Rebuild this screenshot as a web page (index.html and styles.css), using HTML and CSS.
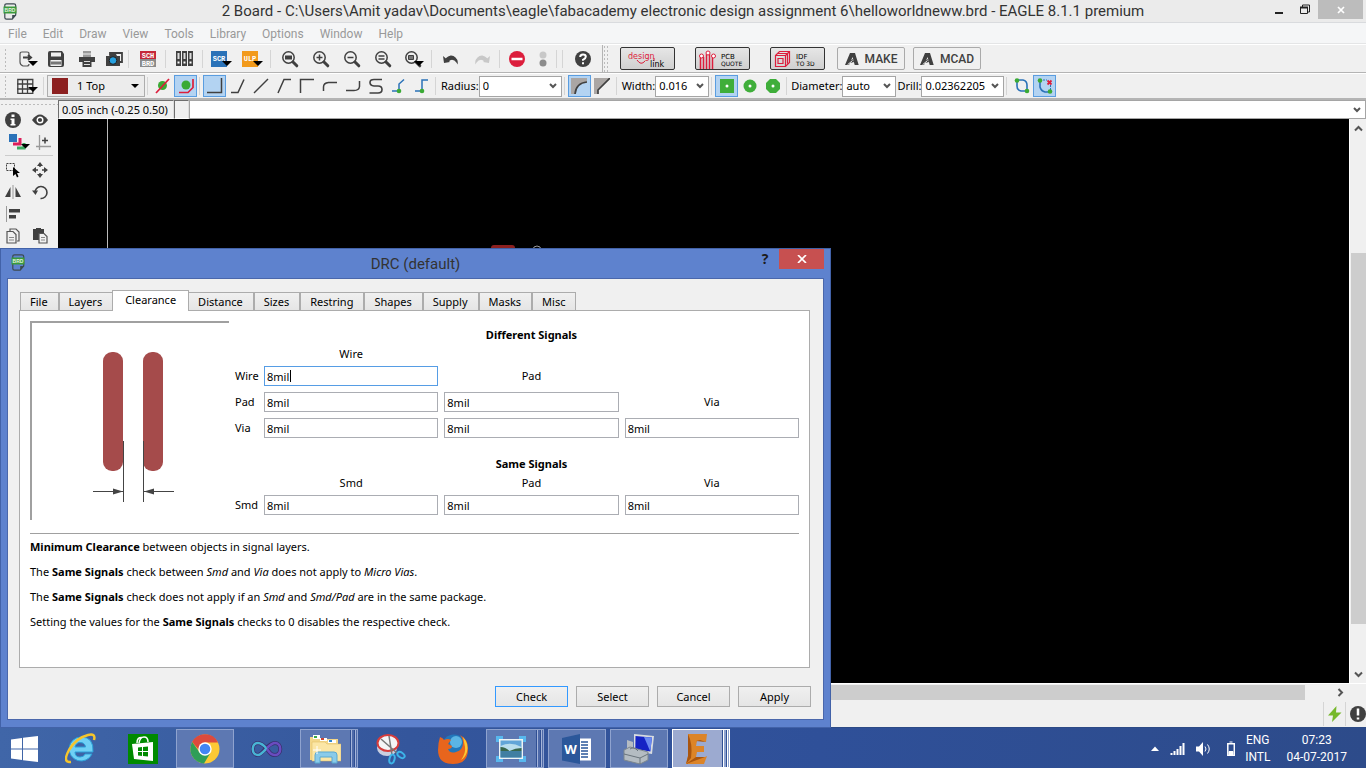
FILE: index.html
```html
<!DOCTYPE html>
<html lang="en">
<head>
    <meta charset="UTF-8">
    <title>2 Board - EAGLE 8.1.1 premium</title>
    <meta name="viewport" content="width=device-width, initial-scale=1.0">
    <link rel="stylesheet" href="styles.css">
</head>
<body>
<!-- shared symbols -->
<svg class="defs" width="0" height="0">
    <symbol id="brd" viewBox="0 0 16 17">
        <path d="M4.500.800h7.500q1.700 0 1.700 1.700v9.500l-3.500 4.200H4.500q-1.700 0-1.700-1.700v-12Q2.800.800 4.500.800z" fill="none" stroke="#3c4a50" stroke-width="1.200"/>
        <path d="M13.500 12h-3.300v4z" fill="#3c4a50"/>
        <path d="M1.500 3.500h13v7h-13z" fill="#3a9a3c"/>
        <text x="8" y="9" text-anchor="middle" font-family="Liberation Sans, sans-serif" font-size="5" font-weight="bold" fill="#e4f5e0">BRD</text>
    </symbol>
    <symbol id="lens" viewBox="0 0 18 18">
        <circle cx="7.500" cy="7.500" r="5.700" fill="none" stroke="#404040" stroke-width="1.500"/>
        <path d="M12 12l3.800 3.800" stroke="#404040" stroke-width="3" stroke-linecap="round"/>
    </symbol>
    <symbol id="adsk" viewBox="0 0 14 14">
        <path d="M0 13L5 1h5l3.700 12h-4L7.600 5 4 13z" fill="#404040"/>
        <path d="M3 10l5-3 1 3-4 1z" fill="#404040"/>
        <path d="M2.500 12.800L7.500 8.500" stroke="#f0f0f0" stroke-width="1"/>
    </symbol>
</svg>

<div class="window">
    <header class="titlebar">
        <svg class="app-icon" width="16" height="17"><use href="#brd"/></svg>
        <h1 class="title">2 Board - C:\Users\Amit yadav\Documents\eagle\fabacademy electronic design assignment 6\helloworldneww.brd - EAGLE 8.1.1 premium</h1>
        <div class="window-buttons">
            <button class="win-btn" aria-label="Minimize"><svg width="10" height="10"><path d="M1 8h8" stroke="#222" stroke-width="2"/></svg></button>
            <button class="win-btn" aria-label="Restore"><svg width="10" height="11"><path d="M.5 3.500h7v6h-7zM2.500 3V1h7v7H8" fill="none" stroke="#222"/><path d="M0 3.500h8" stroke="#222" stroke-width="2"/></svg></button>
            <button class="win-btn win-close" aria-label="Close"><svg width="8" height="8"><path d="M1 1l6 6M7 1L1 7" stroke="#fff" stroke-width="1.700"/></svg></button>
        </div>
    </header>

    <nav class="menubar">
        <button>File</button>
        <button>Edit</button>
        <button>Draw</button>
        <button>View</button>
        <button>Tools</button>
        <button>Library</button>
        <button>Options</button>
        <button>Window</button>
        <button>Help</button>
    </nav>

    <div class="toolbar">
        <span class="handle"></span>
        <button class="tool" aria-label="Open"><svg width="20" height="16"><path d="M11 5V3q0-2-2-2H4Q2 1 2 3v8q0 3 3 4h4q2 0 2-2" fill="none" stroke="#555" stroke-width="1.200"/><path d="M5 6.500h7M10 4l3 2.500L10 9" fill="none" stroke="#404040" stroke-width="2"/><path d="M10 10h10l-5 5z" fill="#000"/></svg></button>
        <button class="tool" aria-label="Save"><svg width="16" height="16"><path d="M2 0h12l2 3v11q0 2-2 2H2q-2 0-2-2V2q0-2 2-2z" fill="#404040"/><path d="M3 1.500h10v4H3zM2.500 9h11v6h-11z" fill="#f0f0f0"/><path d="M3 10.500h10v3H3z" fill="#777"/></svg></button>
        <button class="tool wider" aria-label="Print"><svg width="16" height="16"><path d="M4 0h8v6H4z" fill="#999"/><path d="M4 3h8" stroke="#eee"/><path d="M0 6h16v5H0z" fill="#404040"/><path d="M3.500 9h9v7h-9z" fill="#404040"/><path d="M5 10.500h6M5 13.500h6" stroke="#ddd"/></svg></button>
        <button class="tool tight" aria-label="Export image"><svg width="17" height="16"><path d="M4 4V2h12v9h-2" fill="none" stroke="#404040" stroke-width="1.800"/><path d="M0 5h3l1-2h6l1 2h3v10H0z" fill="#404040"/><circle cx="7" cy="9.500" r="3.800" fill="#27a1e0" stroke="#222"/></svg></button>
        <span class="sep"></span>
        <button class="tool wide" aria-label="Switch to schematic"><svg width="16" height="16" class="tiny"><path d="M0 0h16v8H0z" fill="#c5283a"/><path d="M0 8h16v8H0z" fill="#8c8c8c"/><text x="8" y="7">SCH</text><text x="8" y="15">BRD</text></svg></button>
        <span class="sep"></span>
        <button class="tool wide" aria-label="Library manager"><svg width="17" height="15"><path d="M0 0h5v15H0zM6 0h5v15H6zM12 0h5v15h-5z" fill="#404040"/><path d="M1.500 2h2v6h-2zM7.500 2h2v6h-2zM13.500 2h2v6h-2z" fill="#ddd"/><path d="M1.500 11.500h2M7.500 11.500h2M13.500 11.500h2" stroke="#fff" stroke-width="2"/></svg></button>
        <span class="sep"></span>
        <button class="tool wide" aria-label="Run script"><svg width="21" height="16" class="tiny"><path d="M0 0h16v16H0z" fill="#2a72b8"/><text x="8" y="10">SCR</text><path d="M11 10h10l-5 5z" fill="#000"/></svg></button>
        <button class="tool wide" aria-label="Run ULP"><svg width="21" height="16" class="tiny"><path d="M0 0h16v16H0z" fill="#f29a1b"/><text x="8" y="10">ULP</text><path d="M11 10h10l-5 5z" fill="#000"/></svg></button>
        <span class="sep"></span>
        <button class="tool wide" aria-label="Zoom to fit"><svg width="18" height="18"><use href="#lens"/><path d="M4 5.500h7v4H4z" fill="#404040"/></svg></button>
        <button class="tool wide" aria-label="Zoom in"><svg width="18" height="18"><use href="#lens"/><path d="M4.500 7.500h6M7.500 4.500v6" stroke="#404040" stroke-width="1.500"/></svg></button>
        <button class="tool wide" aria-label="Zoom out"><svg width="18" height="18"><use href="#lens"/><path d="M4.500 7.500h6" stroke="#404040" stroke-width="1.500"/></svg></button>
        <button class="tool wide" aria-label="Redraw"><svg width="18" height="18"><use href="#lens"/><path d="M4.500 6h6M4.500 9h6" stroke="#404040" stroke-width="1.500"/></svg></button>
        <button class="tool wide" aria-label="Zoom select"><svg width="20" height="18"><use href="#lens" width="18"/><path d="M4.500 5.500h5v4h-5z" fill="#777" stroke="#404040"/><path d="M10 11h10l-5 5z" fill="#000"/></svg></button>
        <span class="sep"></span>
        <button class="tool wide" aria-label="Undo"><svg width="16" height="12"><path d="M3 6q5-5 9-1 2 2 2 4-2-3-5-3-2 0-4 2" fill="#404040" stroke="#404040" stroke-width="1.500"/><path d="M0 3l1 7 6-1z" fill="#404040"/></svg></button>
        <button class="tool wide" aria-label="Redo"><svg width="16" height="12"><path d="M13 6Q8 1 4 5 2 7 2 9q2-3 5-3 2 0 4 2" fill="#c8c8c8" stroke="#c8c8c8" stroke-width="1.500"/><path d="M16 3l-1 7-6-1z" fill="#c8c8c8"/></svg></button>
        <span class="sep"></span>
        <button class="tool" aria-label="Stop"><svg width="16" height="16"><circle cx="8" cy="8" r="8" fill="#dc1e3c"/><path d="M2.500 8h11" stroke="#fff" stroke-width="2.500"/></svg></button>
        <button class="tool tight" aria-label="Go"><svg width="8" height="16"><circle cx="4" cy="4" r="3.500" fill="#c8c8c8"/><circle cx="4" cy="12" r="3.500" fill="#8c8c8c"/></svg></button>
        <span class="sep"></span>
        <span class="sep"></span>
        <button class="tool wider" aria-label="Help"><svg width="16" height="16"><circle cx="8" cy="8" r="8" fill="#404040"/><path d="M5.200 6q0-2.500 2.800-2.500t2.800 2.300Q10.800 7.300 8 8.800v1M8 11.200v2" fill="none" stroke="#fff" stroke-width="2"/></svg></button>
        <span class="handle split"></span>
        <div class="brand-buttons">
            <button class="brand" aria-label="Design link"><svg width="53" height="20" class="pix"><path d="M16 11q4 6 8 1M33 9v3" fill="none" stroke="#dc1e3c"/><text x="7" y="10" font-size="8" fill="#dc1e3c">design</text><text x="29" y="18" font-size="8">link</text></svg></button>
            <button class="brand" aria-label="PCB quote"><svg width="53" height="20" class="pix"><path d="M4.500 8v12M7.500 8v12M10.500 5v15M13.500 5v15M16.500 8v12" fill="none" stroke="#dc1e3c" stroke-width="1.500"/><g fill="#fff" stroke="#dc1e3c"><circle cx="5.500" cy="7" r="2"/><circle cx="12" cy="4" r="2"/><circle cx="17.500" cy="7" r="2"/></g><text x="25" y="10" font-size="7">PCB</text><text x="25" y="17" font-size="6">QUOTE</text></svg></button>
            <button class="brand" aria-label="IDF to 3D"><svg width="53" height="20" class="pix"><path d="M4.500 6.500l4-4h10v11l-4 4h-10zM4.500 6.500h10v11M14.500 6.500l4-4M7 9.500h5v5H7zM6 4.500h10.500v10" fill="none" stroke="#dc1e3c" stroke-width="1.200"/><text x="25" y="10" font-size="7">IDF</text><text x="25" y="17" font-size="6">TO 3D</text></svg></button>
        </div>
        <div class="adsk-buttons">
            <button class="adsk"><svg width="14" height="14"><use href="#adsk"/></svg>MAKE</button>
            <button class="adsk"><svg width="14" height="14"><use href="#adsk"/></svg>MCAD</button>
        </div>
    </div>

    <div class="toolbar params">
        <span class="handle"></span>
        <button class="tool grid" aria-label="Grid"><svg width="21" height="16"><path d="M.8 1.500h15v14H.8zM5.500 1v15M10.500 1v15M0 6h16M0 11h16" fill="none" stroke="#404040" stroke-width="1.300"/><path d="M11 9h10l-5 5z" fill="#000"/></svg></button>
        <span class="sep"></span>
        <span class="layer">
            <span class="swatch"></span>
            <select aria-label="Layer"><option>1 Top</option></select>
        </span>
        <span class="sep"></span>
        <button class="tool" aria-label="Ignore obstacles"><svg width="16" height="16"><circle cx="7.500" cy="7.500" r="4.500" fill="#3aaa35"/><path d="M1 15L14 1" stroke="#dc1e3c" stroke-width="1.700"/></svg></button>
        <button class="tool on" aria-label="Walkaround"><svg width="16" height="16"><circle cx="8" cy="7" r="4.500" fill="#3aaa35"/><path d="M1 14.500h9l5-5V1" fill="none" stroke="#dc1e3c" stroke-width="1.700"/></svg></button>
        <span class="sep"></span>
        <button class="tool on" aria-label="Bend 0"><svg width="16" height="16"><path d="M0 14.500h14.500V0" fill="none" stroke="#404040" stroke-width="1.500"/></svg></button>
        <button class="tool" aria-label="Bend 1"><svg width="16" height="16"><path d="M1 14.500h7l6-13" fill="none" stroke="#404040" stroke-width="1.500"/></svg></button>
        <button class="tool" aria-label="Bend 2"><svg width="16" height="16"><path d="M1 15L15 1" fill="none" stroke="#404040" stroke-width="1.500"/></svg></button>
        <button class="tool" aria-label="Bend 3"><svg width="16" height="16"><path d="M2 15L8 1.500h7" fill="none" stroke="#404040" stroke-width="1.500"/></svg></button>
        <button class="tool" aria-label="Bend 4"><svg width="16" height="16"><path d="M1.500 15V1.500H15" fill="none" stroke="#404040" stroke-width="1.500"/></svg></button>
        <button class="tool" aria-label="Bend 5"><svg width="16" height="16"><path d="M1.500 13V9q0-4 5-4.500H15" fill="none" stroke="#404040" stroke-width="1.500"/></svg></button>
        <button class="tool" aria-label="Bend 6"><svg width="16" height="16"><path d="M1 12.500h8q5 0 5.500-4V3" fill="none" stroke="#404040" stroke-width="1.500"/></svg></button>
        <button class="tool" aria-label="Bend 7"><svg width="16" height="16"><path d="M14 1.500H6Q2 1.500 2 4.500T6 8h4q4 0 4 3.500T10 15H1.500" fill="none" stroke="#404040" stroke-width="1.600"/></svg></button>
        <button class="tool" aria-label="Route to"><svg width="16" height="16"><path d="M1 13h7V6l5-4.500" fill="none" stroke="#2a72b8" stroke-width="1.500"/><circle cx="8" cy="13" r="2.300" fill="#3aaa35"/></svg></button>
        <button class="tool" aria-label="Route from"><svg width="16" height="16"><path d="M1 13h7V2h6" fill="none" stroke="#2a72b8" stroke-width="1.500"/><circle cx="8" cy="13" r="2.300" fill="#3aaa35"/></svg></button>
        <span class="sep"></span>
        <label for="radius">Radius:</label>
        <select id="radius" class="combo long"><option>0</option></select>
        <span class="sep"></span>
        <button class="tool on" aria-label="Round miter"><svg width="16" height="16"><path d="M0 0h16v4Q5 5 4 16H0z" fill="#aaa6a4"/><path d="M4 16Q5 5 16 4" fill="none" stroke="#404040" stroke-width="1.700"/></svg></button>
        <button class="tool" aria-label="Straight miter"><svg width="16" height="16"><path d="M0 0h16L4 12v4H0z" fill="#aaa6a4"/><path d="M4 16v-4L16 0" fill="none" stroke="#404040" stroke-width="1.700"/></svg></button>
        <span class="sep"></span>
        <label for="width">Width:</label>
        <select id="width" class="combo"><option>0.016</option></select>
        <span class="sep"></span>
        <button class="tool on" aria-label="Square via"><svg width="14" height="14"><path d="M0 0h14v14H0z" fill="#3fae3a"/><circle cx="7" cy="7" r="1.500" fill="#fff"/></svg></button>
        <button class="tool" aria-label="Round via"><svg width="14" height="14"><circle cx="7" cy="7" r="6.500" fill="#3fae3a"/><circle cx="7" cy="7" r="1.500" fill="#fff"/></svg></button>
        <button class="tool" aria-label="Octagon via"><svg width="14" height="14"><path d="M4 0h6l4 4v6l-4 4H4l-4-4V4z" fill="#3fae3a"/><circle cx="7" cy="7" r="1.500" fill="#fff"/></svg></button>
        <span class="sep"></span>
        <label for="diameter" class="snug">Diameter:</label>
        <select id="diameter" class="combo"><option>auto</option></select>
        <label for="drill" class="snug">Drill:</label>
        <select id="drill" class="combo long"><option>0.02362205</option></select>
        <span class="sep"></span>
        <button class="tool" aria-label="Loop removal"><svg width="16" height="16"><path d="M2 2h7q4 1 4 5v6H7q-4-1-4-5V2" fill="none" stroke="#2a72b8" stroke-width="1.600"/><circle cx="3" cy="2.500" r="2.300" fill="#3aaa35"/><circle cx="13" cy="13" r="2.300" fill="#3aaa35"/></svg></button>
        <button class="tool on" aria-label="Remove loops"><svg width="16" height="16"><path d="M3 2v7q1 4 5 5h5" fill="none" stroke="#2a72b8" stroke-width="1.600"/><path d="M6 2h4M13.500 7v5" stroke="#2a72b8" stroke-dasharray="2 1"/><path d="M10.500 2.500l4 4M14.500 2.500l-4 4" stroke="#dc1e3c" stroke-width="1.800"/><circle cx="3" cy="2.500" r="2.300" fill="#3aaa35"/><circle cx="13" cy="13.500" r="2.300" fill="#3aaa35"/></svg></button>
    </div>

    <main class="work">
        <aside class="palette">
            <button aria-label="Info"><svg width="16" height="16"><circle cx="8" cy="8" r="8" fill="#404040"/><path d="M6.500 2.500h3v2.500h-3zM5.500 6.500h4V12h1v1.500h-5V12h1V8h-1z" fill="#fff"/></svg></button>
            <button aria-label="Show"><svg width="16" height="12"><path d="M0 6q8-11 16 0Q8 17 0 6z" fill="#404040"/><circle cx="8" cy="6" r="2.800" fill="#404040" stroke="#fff" stroke-width="1.400"/></svg></button>
            <button class="layers" aria-label="Layer settings"><svg width="21" height="16"><path d="M0 0h8v8H0z" fill="#2a72b8"/><path d="M11 4v6H4" fill="none" stroke="#dc1e5a" stroke-width="3"/><path d="M15 9v5H8" fill="none" stroke="#3aaa60" stroke-width="3"/><path d="M12 10h9l-4.500 4.500z" fill="#000"/></svg></button>
            <button class="mark" aria-label="Mark"><svg width="16" height="16"><path d="M3.500 1v15M0 12.500h15" stroke="#999" stroke-width="1.300"/><path d="M6 6.500h6M9 3.500v6" stroke="#404040" stroke-width="1.500"/></svg></button>
            <hr>
            <button aria-label="Group"><svg width="16" height="16"><path d="M1.500 1.500h8v7h-8z" fill="none" stroke="#404040" stroke-dasharray="2 1"/><path d="M8 5v9l2.500-2 1.500 3.500 1.500-1L12 11h3z" fill="#000"/></svg></button>
            <button aria-label="Move"><svg width="16" height="16"><path d="M8 0l3 4H5zM8 16l3-4H5zM0 8l4-3v6zM16 8l-4-3v6z" fill="#404040"/><path d="M8 3v2M8 11v2M3 8h3M10 8h3" stroke="#404040" stroke-width="1.500"/></svg></button>
            <button aria-label="Mirror"><svg width="16" height="14"><path d="M5.500 2v10H0zM10.500 2v10H16z" fill="#404040"/><path d="M8 0v14" stroke="#999"/></svg></button>
            <button aria-label="Rotate"><svg width="16" height="16"><path d="M3 9a6 6 0 1 1 5.500 5.500" fill="none" stroke="#404040" stroke-width="1.600"/><path d="M0 6.500h6L3.500 11z" fill="#404040"/></svg></button>
            <button aria-label="Align"><svg width="16" height="16"><path d="M1.500 0v16" stroke="#999"/><path d="M4 3h11v3.500H4zM4 9h7v3.500H4z" fill="#404040"/></svg></button>
            <span></span>
            <button aria-label="Copy"><svg width="14" height="16"><path d="M4 3V1h6l3 3v9h-2M1 3.500h6l3 3V15H1z" fill="#f0f0f0" stroke="#555" stroke-width="1.200"/><path d="M3 9.500h5M3 12h5" stroke="#888"/></svg></button>
            <button aria-label="Paste"><svg width="15" height="16"><path d="M0 1h3V0h5v1h3v11H0z" fill="#404040"/><path d="M6 5.500h5l3 3V15H6z" fill="#f0f0f0" stroke="#555" stroke-width="1.200"/><path d="M8 9.500h4M8 12h4" stroke="#888"/></svg></button>
        </aside>

        <section class="editor">
            <div class="command-row">
                <output class="coords">0.05 inch (-0.25 0.50)</output>
                <span class="status-cell"></span>
                <input class="command" type="text" aria-label="Command line">
            </div>
            <div class="board-row">
                <div class="board">
                    <svg width="490" height="129">
                        <path d="M49.500 0v129" stroke="#bbb"/>
                        <path d="M433 129q0-3 3-3h18q3 0 3 3z" fill="#8c2020"/>
                        <circle cx="479" cy="131" r="4" fill="none" stroke="#999"/>
                    </svg>
                </div>
                <div class="scroll-v">
                    <svg width="9" height="7"><path d="M1 5.500l3.500-3.500L8 5.500" fill="none" stroke="#555" stroke-width="2"/></svg>
                    <span class="thumb"></span>
                    <svg width="9" height="7"><path d="M1 1.500L4.500 5 8 1.500" fill="none" stroke="#555" stroke-width="2"/></svg>
                </div>
            </div>
            <div class="scroll-h">
                <span class="thumb"></span>
                <svg width="7" height="9"><path d="M1.500 1L5 4.500 1.500 8" fill="none" stroke="#555" stroke-width="2"/></svg>
            </div>
        </section>
    </main>

    <footer class="statusbar">
        <span class="sep"></span>
        <svg width="14" height="16"><path d="M8.500 0L0 9.500h5L4 16l9.500-9.500H8z" fill="#76b82a"/></svg>
        <span class="sep"></span>
        <svg width="16" height="16"><circle cx="8" cy="8" r="8" fill="#404040"/><path d="M8 2.500v7M8 11.500v2" stroke="#fff" stroke-width="2.500"/></svg>
    </footer>
</div>

<div class="dialog" role="dialog" aria-labelledby="drc-title">
    <div class="dialog-title">
        <svg class="app-icon" width="16" height="17"><use href="#brd"/></svg>
        <h2 id="drc-title">DRC (default)</h2>
        <div class="dialog-buttons">
            <button class="help">?</button>
            <button class="close" aria-label="Close"><svg width="10" height="8"><path d="M1 0l8 8M9 0L1 8" stroke="#fff" stroke-width="1.700"/></svg></button>
        </div>
    </div>
    <div class="dialog-body">
        <div class="tabs" role="tablist">
            <button role="tab">File</button>
            <button role="tab">Layers</button>
            <button role="tab" class="selected" aria-selected="true">Clearance</button>
            <button role="tab">Distance</button>
            <button role="tab">Sizes</button>
            <button role="tab">Restring</button>
            <button role="tab">Shapes</button>
            <button role="tab">Supply</button>
            <button role="tab">Masks</button>
            <button role="tab">Misc</button>
        </div>
        <div class="panel">
            <div class="settings">
                <div class="preview">
                    <svg width="197" height="197">
                        <rect x="71" y="29" width="20" height="119" rx="9" fill="#a54b4b"/>
                        <rect x="111" y="29" width="20" height="119" rx="9" fill="#a54b4b"/>
                        <path d="M91.500 118v61M111.500 118v61M61 168.500h30M112 168.500h30" stroke="#444"/>
                        <path d="M91 168.500l-10-3v6zM112 168.500l10-3v6z" fill="#444"/>
                    </svg>
                </div>
                <form class="clearances">
                    <h3>Different Signals</h3>
                    <span class="col col-1">Wire</span>
                    <label for="ww">Wire</label>
                    <input id="ww" class="focused" type="text" value="8mil">
                    <span class="col">Pad</span>
                    <label for="pw">Pad</label>
                    <input id="pw" type="text" value="8mil">
                    <input aria-label="Pad to pad" type="text" value="8mil">
                    <span class="col">Via</span>
                    <label for="vw">Via</label>
                    <input id="vw" type="text" value="8mil">
                    <input aria-label="Via to pad" type="text" value="8mil">
                    <input aria-label="Via to via" type="text" value="8mil">
                    <h3>Same Signals</h3>
                    <span class="col col-1">Smd</span>
                    <span class="col">Pad</span>
                    <span class="col">Via</span>
                    <label for="ss">Smd</label>
                    <input id="ss" type="text" value="8mil">
                    <input aria-label="Smd to pad" type="text" value="8mil">
                    <input aria-label="Smd to via" type="text" value="8mil">
                </form>
            </div>
            <div class="notes">
                <p><b>Minimum Clearance</b> between objects in signal layers.</p>
                <p>The <b>Same Signals</b> check between <i>Smd</i> and <i>Via</i> does not apply to <i>Micro Vias</i>.</p>
                <p>The <b>Same Signals</b> check does not apply if an <i>Smd</i> and <i>Smd/Pad</i> are in the same package.</p>
                <p>Setting the values for the <b>Same Signals</b> checks to 0 disables the respective check.</p>
            </div>
        </div>
        <div class="actions">
            <button class="default">Check</button>
            <button>Select</button>
            <button>Cancel</button>
            <button>Apply</button>
        </div>
    </div>
</div>

<footer class="taskbar">
    <button class="start" aria-label="Start"><svg width="27" height="26"><path d="M0 3.500L11 2v10.500H0zM12 1.800L27 0v12.500H12zM0 13.500h11V24L0 22.500zM12 13.500h15V26l-15-1.800z" fill="#fff"/></svg></button>
    <button class="task" aria-label="Internet Explorer"><svg width="32" height="32"><path d="M16 4a12 12 0 1 0 11 17h-7q-1 3-5 3-5 0-5-5h18Q29 4 16 4zm-6 10q1-4.500 5-4.500 5 0 5.500 4.500z" fill="#6fd0f5" stroke="#2a9fd8"/><path d="M6 29Q-3 30 4 17 11 5 23 2q8-2 6 5" fill="none" stroke="#f6c52c" stroke-width="2.500"/></svg></button>
    <button class="task" aria-label="Store"><svg width="30" height="30"><path d="M0 0h30v30H0z" fill="#008a00"/><path d="M4 10l21-2v19L6 25z" fill="#fff"/><path d="M9 9q0-6 5-5.500M11 9q1-6 5-6t4 5" fill="none" stroke="#fff" stroke-width="1.500"/><path d="M10 13.500l4-.5v4h-4zM15 13l5-.5V17h-5zM10 18h4v4l-4-.5zM15 18h5v4.500l-5-.5z" fill="#008a00"/></svg></button>
    <button class="task open" aria-label="Chrome"><svg width="30" height="30"><circle cx="15" cy="15" r="14.500" fill="#fcc934"/><path d="M2.200 8A14.500 14.500 0 0 1 28 8.500H15l-6.500 7z" fill="#dc4a3d"/><path d="M2.200 8A14.500 14.500 0 0 0 14 29.500l6-10-11-2z" fill="#2f9e58"/><circle cx="15" cy="15" r="6.700" fill="#fff"/><circle cx="15" cy="15" r="5.300" fill="#4285f4"/></svg></button>
    <button class="task" aria-label="Visual Studio"><svg width="32" height="18"><path d="M16 9C11 3 9 3 7 3 0 3 0 15 7 15c5 0 9-12 17-12 7 0 7 12 0 12-4 0-5-2-8-6z" fill="none" stroke="#38306e" stroke-width="4"/><path d="M16 9C11 3 9 3 7 3 0 3 0 15 7 15c3 0 6-4 9-7" fill="none" stroke="#48b4d4" stroke-width="2.500"/><path d="M16 8c3-3 5-5 8-5 7 0 7 12 0 12-4 0-5-2-8-6" fill="none" stroke="#6a4cc0" stroke-width="2.500"/></svg></button>
    <button class="task open stack" aria-label="File Explorer"><svg width="32" height="30"><path d="M1 3h9l2 2h17v21H1z" fill="#f3d789"/><path d="M4 1h7v4H4z" fill="#fff"/><path d="M5 2h3v2H5z" fill="#3aa845"/><path d="M11 4h7v3h-7z" fill="#fff"/><path d="M12 4h3v2h-3z" fill="#cc4433"/><path d="M19 6h8v3h-8z" fill="#fff"/><path d="M20 6h3v2h-3z" fill="#3388cc"/><path d="M3 8h13l2 2h14v17H3z" fill="#fbe6a5" stroke="#ddb95d" stroke-width=".5"/><path d="M6 29V21q0-3 3-3h16q3 0 3 3v8h-5v-6H11v6z" fill="#8acbea" stroke="#5ba8d0"/><path d="M8 12v8M4 16h8" stroke="#fff"/></svg></button>
    <button class="task" aria-label="Snipping Tool"><svg width="32" height="32"><ellipse cx="12" cy="15" rx="10" ry="8" fill="#c9cfe0"/><ellipse cx="13" cy="10" rx="10.500" ry="8" fill="#f4f4f6" stroke="#d63c3c" stroke-width="2"/><path d="M6 6l16 14M14 3l3 19" stroke="#777" stroke-width="1.500"/><ellipse cx="26" cy="22" rx="4" ry="2.500" transform="rotate(35 26 22)" fill="none" stroke="#3db4e8" stroke-width="2"/><ellipse cx="17" cy="26" rx="2.500" ry="4.500" transform="rotate(15 17 26)" fill="none" stroke="#3db4e8" stroke-width="2"/></svg></button>
    <button class="task" aria-label="Firefox"><svg width="32" height="32"><circle cx="17" cy="14" r="12.500" fill="#2277bb"/><circle cx="19" cy="9" r="6" fill="#5bb4e4"/><path d="M3 4q3 1 4 3 4-2 7 0l-3 4 4 2q0 3-4 3 2 5 8 3 7-2 7-9 0-5-3-8 8 4 8 14 0 15-15 15T1 17Q1 10 3 4z" fill="#e8651d"/><path d="M26 4q6 6 4 15-2 6-6 8 5-7 4-13z" fill="#fcc832"/></svg></button>
    <button class="task open stack" aria-label="Photos"><svg width="30" height="26"><path d="M1.500 6V1.500H7M23 1.500h5.500V6M1.500 20v4.500H7M23 24.500h5.500V20" fill="none" stroke="#58b8ee" stroke-width="3"/><path d="M3 3h24v20H3z" fill="#eef4f4"/><path d="M4.500 4.500h21v17h-21z" fill="#62a5d8"/><path d="M4.500 10q10-5 21 1v4h-21z" fill="#b9dded"/><path d="M4.500 11q5 0 9 4 6-3 12-3v3h-21z" fill="#39664c"/><path d="M4.500 15h21v6.500h-21z" fill="#417fa2"/></svg></button>
    <button class="task open" aria-label="Word"><svg width="30" height="30"><path d="M17 4.500h12v22H17z" fill="#fff"/><path d="M19 8h7M19 11h7M19 14h7M19 17h7M19 20h7M19 23h7" stroke="#2b579a" stroke-width="1.500"/><path d="M0 4l18-4v30L0 26.500z" fill="#2b579a"/><text x="8.500" y="19.500" text-anchor="middle" font-size="13" font-weight="bold" fill="#fff">W</text></svg></button>
    <button class="task open" aria-label="System tools"><svg width="34" height="32"><path d="M12 1l20 2-2 18-18-3z" fill="#d8dce0"/><path d="M13.500 3l16.500 1.500-1.700 14-15-2.500z" fill="#1524c4"/><path d="M22 4l8 .5-1.700 14z" fill="#6a8bf0"/><path d="M5 7l6 2v10l-6-1z" fill="#b6bcc2"/><path d="M2 17l6-3 18 5v8l-8 4-16-4z" fill="#b4bcc2" stroke="#7c868e"/><path d="M2 21l16 4 8-4M18 25v6M8 16q4-3 8 2" fill="none" stroke="#6a747c"/></svg></button>
    <button class="task open active stack" aria-label="EAGLE"><svg width="24" height="32"><path d="M3 1h19l-1 8-6-1h-3l-1 5h8v6h-7l-1 5h9l2-1-3 8H1l2-8z" fill="#dc8428"/><path d="M3 1q5 10 3 24l-5 6 2-8zM11 8l10 1-6-2zM1 31l10-7 9 0z" fill="#a95510"/></svg></button>
    <div class="tray">
        <svg width="10" height="6"><path d="M1 5l4-4.500L9 5z" fill="#fff"/></svg>
        <svg width="16" height="13"><path d="M1.500 13v-2M4.500 13v-4M7.500 13V7M10.500 13V4M13.500 13V1" stroke="#fff" stroke-width="2"/></svg>
        <svg width="15" height="14"><path d="M0 4.500h3L7 0v14L3 9.500H0z" fill="#fff"/><path d="M9 4.500q2 2.500 0 5M11.500 2.500q3.500 4.500 0 9" fill="none" stroke="#fff"/></svg>
        <svg class="battery" width="8" height="15"><path d="M.8 2.800h6.500v11.500H.8z" fill="none" stroke="#fff" stroke-width="1.500"/><path d="M2.500 1h3M2 10.500h4v3H2z" fill="#fff" stroke="#fff"/></svg>
        <div class="lang">ENG<br>INTL</div>
        <div class="clock">07:23<br>04-07-2017</div>
    </div>
</footer>
</body>
</html>
```
FILE: styles.css
```css
* {
    box-sizing: border-box;
}

html, body {
    height: 100%;
}

body {
    margin: 0;
    display: flex;
    flex-direction: column;
    overflow: hidden;
    position: relative;
    background: #f0f0f0;
    color: #000;
    font: 11px/14px "Noto Sans", Tahoma, sans-serif;
}

button, input, select {
    font: inherit;
    color: inherit;
    margin: 0;
    padding: 0;
    border: 0;
    border-radius: 0;
    background: none;
}

h1, h2, h3, p {
    margin: 0;
    font-size: 11px;
    font-weight: normal;
}

svg {
    display: block;
    flex: none;
}

.defs {
    position: absolute;
}

/* main window */
.window {
    flex: 1;
    min-height: 0;
    display: flex;
    flex-direction: column;
}

.titlebar {
    height: 23px;
    display: grid;
    grid-template-columns: 100px 1fr 100px;
    align-items: center;
    background: #ebebeb;
    border-bottom: 1px solid #d9dbde;
}

.titlebar .app-icon {
    margin-left: 2px;
}

.title {
    font: 15px/22px Roboto, "Segoe UI", sans-serif;
    color: #333;
    text-align: center;
    white-space: nowrap;
}

.window-buttons {
    display: flex;
    justify-content: flex-end;
    align-self: start;
    margin-right: 3px;
}

.win-btn {
    width: 26px;
    height: 19px;
    display: flex;
    align-items: center;
    justify-content: center;
}

.win-close {
    width: 45px;
    background: #bcbcbc;
}

.menubar {
    height: 21px;
    display: flex;
    background: #f5f6f7;
    border-bottom: 1px solid #e4e5e6;
}

.menubar button {
    padding: 0 8px;
    font: 12px/22px Roboto, "Segoe UI", sans-serif;
    color: #999;
}

.toolbar {
    height: 29px;
    display: flex;
    align-items: center;
    padding-left: 4px;
    border-top: 1px solid #fff;
    border-bottom: 1px solid #b4b4b4;
}

.params {
    height: 27px;
    border-bottom-width: 2px;
}

.handle {
    width: 3px;
    height: 22px;
    margin-right: 7px;
    background: radial-gradient(#bbb 1px, transparent 1px) 0 0 / 3px 4px;
}

.handle.split {
    width: 6px;
    height: 28px;
    margin: 0 12px 0 3px;
    border-left: 1px solid #b4b4b4;
}

.tool {
    width: 28px;
    height: 22px;
    display: flex;
    align-items: center;
    justify-content: center;
    flex: none;
}

.tool.wide {
    width: 31px;
}

.tool.wider {
    width: 33px;
}

.tool.tight {
    width: 23px;
}

.params .tool {
    width: 23px;
}

.params .grid {
    width: 27px;
}

.tool.on {
    background: #b3d3f2;
    border: 1px solid #5a9de0;
}

.tiny text {
    font: bold 7px "Liberation Mono", monospace;
    text-anchor: middle;
    fill: #fff;
}

.sep {
    width: 2px;
    height: 18px;
    margin: 0 2px;
    flex: none;
    background: #d5d5d5;
    border-right: 1px solid #f0f0f0;
}

.brand-buttons {
    display: flex;
    gap: 20px;
}

.brand {
    width: 55px;
    height: 23px;
    border: 1px solid #333;
    border-radius: 2px;
    background: linear-gradient(#e6e6e6, #d0d0d0);
}

.pix text {
    font-family: "DejaVu Sans", sans-serif;
}

.adsk-buttons {
    display: flex;
    gap: 8px;
    margin-left: 12px;
}

.adsk {
    width: 68px;
    height: 23px;
    display: flex;
    align-items: center;
    justify-content: center;
    gap: 6px;
    border: 1px solid #aaa;
    border-radius: 2px;
    font: 500 12px/20px Roboto, sans-serif;
    color: #404040;
}

.layer {
    width: 98px;
    height: 22px;
    display: flex;
    align-items: center;
    border: 1px solid #adadad;
    background: #ececec;
}

.swatch {
    width: 16px;
    height: 16px;
    margin: 0 4px;
    background: #8c2020;
}

.layer select {
    flex: 1;
    height: 20px;
    padding-left: 5px;
    appearance: none;
    background: url("data:image/svg+xml,%3Csvg xmlns='http://www.w3.org/2000/svg' width='8' height='4'%3E%3Cpath d='M0 0h8L4 4z'/%3E%3C/svg%3E") no-repeat right 5px center;
}

.params label {
    margin-left: 2px;
}

.params .snug {
    margin-left: 1px;
}

.combo {
    width: 54px;
    height: 21px;
    padding-left: 3px;
    appearance: none;
    border: 1px solid #a5a5a5;
    background: #fff url("data:image/svg+xml,%3Csvg xmlns='http://www.w3.org/2000/svg' width='8' height='6'%3E%3Cpath d='M1 1l3 3 3-3' fill='none' stroke='%23555' stroke-width='2'/%3E%3C/svg%3E") no-repeat right 4px center;
}

.combo.long {
    width: 83px;
}

/* palette on the left, editor on the right */
.work {
    flex: 1;
    min-height: 0;
    display: grid;
    grid-template-columns: 58px 1fr;
}

.palette {
    display: grid;
    grid-template-columns: 26px 28px;
    grid-template-rows: 22px 22px 6px;
    grid-auto-rows: 22px;
    align-content: start;
    padding-top: 9px;
    background: radial-gradient(#bbb 1px, transparent 1px) 4px 3px / 4px 3px repeat-x;
}

.palette button {
    display: flex;
    align-items: center;
    justify-content: center;
}

.palette .layers {
    justify-content: flex-start;
    padding-left: 9px;
}

.palette .mark {
    padding-left: 8px;
}

.palette hr {
    grid-column: 1 / 3;
    width: 48px;
    height: 1px;
    margin: 2px 0 3px 5px;
    border: 0;
    background: #ccc;
}

.editor {
    min-width: 0;
    display: flex;
    flex-direction: column;
}

.command-row {
    height: 19px;
    display: flex;
}

.coords {
    width: 116px;
    padding: 2px 0 0 3px;
    white-space: nowrap;
    border: 1px solid #6e6e6e;
    border-right-color: #ddd;
    border-bottom-color: #fff;
}

.status-cell {
    width: 15px;
    border: 1px solid #6e6e6e;
    border-right-color: #ddd;
    border-bottom-color: #fff;
}

.command {
    flex: 1;
    border: 1px solid #a5a5a5;
    background: #fff url("data:image/svg+xml,%3Csvg xmlns='http://www.w3.org/2000/svg' width='8' height='6'%3E%3Cpath d='M1 1l3 3 3-3' fill='none' stroke='%23555' stroke-width='2'/%3E%3C/svg%3E") no-repeat right 4px center;
}

.board-row {
    flex: 1;
    min-height: 0;
    display: flex;
}

.board {
    flex: 1;
    background: #000;
}

.scroll-v {
    width: 17px;
    display: flex;
    flex-direction: column;
    align-items: center;
    justify-content: space-between;
    padding: 6px 0 5px;
    border-left: 1px solid #fff;
}

.scroll-v .thumb {
    width: 15px;
    height: 67%;
    margin-top: 74px;
    background: #cdcdcd;
}

.scroll-h {
    height: 17px;
    display: flex;
    align-items: center;
    justify-content: space-between;
    padding-right: 22px;
    border-top: 1px solid #fff;
}

.scroll-h .thumb {
    width: 97%;
    height: 15px;
    background: #cdcdcd;
}

.statusbar {
    height: 27px;
    display: flex;
    align-items: center;
    justify-content: flex-end;
}

.statusbar .sep {
    height: 24px;
    margin: 0 3px;
}

/* DRC dialog */
.dialog {
    position: absolute;
    left: 0;
    top: 248px;
    width: 831px;
    padding: 0 6px 7px;
    background: #5e82ce;
    border: 1px solid #4262a8;
}

.dialog-title {
    height: 29px;
    display: grid;
    grid-template-columns: 80px 1fr 80px;
}

.dialog-title .app-icon {
    margin: 5px 0 0 3px;
}

.dialog-title h2 {
    font: 15px/30px Roboto, "Segoe UI", sans-serif;
    color: #333;
    text-align: center;
}

.dialog-buttons {
    display: flex;
    justify-content: flex-end;
    align-items: flex-start;
}

.dialog-buttons .help {
    width: 28px;
    font: bold 14px/20px "Open Sans", sans-serif;
    color: #1c1c1c;
}

.dialog-buttons .close {
    width: 45px;
    height: 20px;
    flex: none;
    display: flex;
    align-items: center;
    justify-content: center;
    background: #c75050;
}

.dialog-body {
    padding: 11px 12px 12px 11px;
    border: 1px solid #4a67ab;
    background: #f0f0f0;
}

.tabs {
    display: flex;
    align-items: flex-end;
    padding-left: 1px;
}

.tabs button {
    height: 18px;
    padding: 0 10px 0 9px;
    border: 1px solid #acacac;
    border-bottom: 0;
    background: linear-gradient(#f0f0f0, #e5e5e5);
}

.tabs .selected {
    height: 20px;
    padding: 0 12px 1px;
    margin: 0 -1px;
    background: #fff;
    position: relative;
}

.tabs .selected::after {
    content: "";
    position: absolute;
    left: 0;
    right: 0;
    bottom: -1px;
    height: 1px;
    background: #fff;
}

.panel {
    height: 358px;
    margin-right: 1px;
    padding: 10px;
    border: 1px solid #acacac;
    background: #fff;
}

.settings {
    display: flex;
    gap: 6px;
    padding-bottom: 13px;
    border-bottom: 1px solid #a0a0a0;
}

.preview {
    width: 199px;
    height: 199px;
    border-left: 2px solid #a0a0a0;
    border-top: 2px solid #a0a0a0;
}

.clearances {
    flex: 1;
    display: grid;
    grid-template-columns: 23px 1fr 1fr 1fr;
    grid-template-rows: 20px 12px 20px 20px 20px 27px 12px 20px;
    gap: 6px;
    padding-top: 1px;
    align-items: center;
}

.clearances h3 {
    grid-column: 2 / 5;
    align-self: end;
    font-weight: bold;
    text-align: center;
}

.clearances .col {
    text-align: center;
    line-height: 12px;
}

.clearances .col-1 {
    grid-column: 2;
}

.clearances label {
    grid-column: 1;
}

.clearances input {
    width: 100%;
    height: 20px;
    padding: 0 2px;
    border: 1px solid #abadb3;
    background: #fff;
}

/* focused field with its text caret */
.clearances .focused {
    border-color: #569de5;
    background: linear-gradient(#000, #000) 25px 3px / 1px 12px no-repeat #fff;
}

.notes {
    padding-top: 6px;
}

.notes p {
    margin-bottom: 11px;
}

.actions {
    display: flex;
    justify-content: flex-end;
    gap: 8px;
    padding-top: 18px;
}

.actions button {
    width: 73px;
    height: 21px;
    border: 1px solid #acacac;
    background: linear-gradient(#f0f0f0, #e5e5e5);
}

.actions .default {
    border-color: #3399ff;
}

/* taskbar */
.taskbar {
    height: 41px;
    display: flex;
    align-items: stretch;
    gap: 4px;
    padding-top: 1px;
    color: #fff;
    background: linear-gradient(90deg, #4066a8, #34569c 30%, #2f5099 60%, #2d4b8a);
    border-top: 1px solid #2c4a86;
}

.start {
    width: 48px;
    padding-left: 11px;
    flex: none;
}

.task {
    width: 58px;
    flex: none;
    display: flex;
    align-items: center;
    justify-content: center;
}

.task.open {
    border: 1px solid #8fa3cf;
    background: #5d78b2;
}

.task.stack {
    padding-right: 8px;
    background: linear-gradient(90deg, transparent 49px, #2f4f94 49px 50px, #a5b5da 50px 51px, #4e6aa9 51px 53px, #2f4f94 53px 54px, #a5b5da 54px 55px, #4e6aa9 55px) #5d78b2;
}

.task.active {
    border-color: #fff;
    background: linear-gradient(90deg, transparent 49px, #2f4f94 49px 50px, #fff 50px 51px, #8fa3cf 51px 53px, #2f4f94 53px 54px, #fff 54px 55px, #8fa3cf 55px) #9caad0;
}

.tray {
    margin-left: auto;
    padding-right: 19px;
    display: flex;
    align-items: center;
    gap: 10px;
    font: 12px/17px Roboto, "Segoe UI", sans-serif;
    text-align: center;
}

.tray .battery {
    margin-left: 6px;
}

.clock {
    margin-left: 6px;
}
```
